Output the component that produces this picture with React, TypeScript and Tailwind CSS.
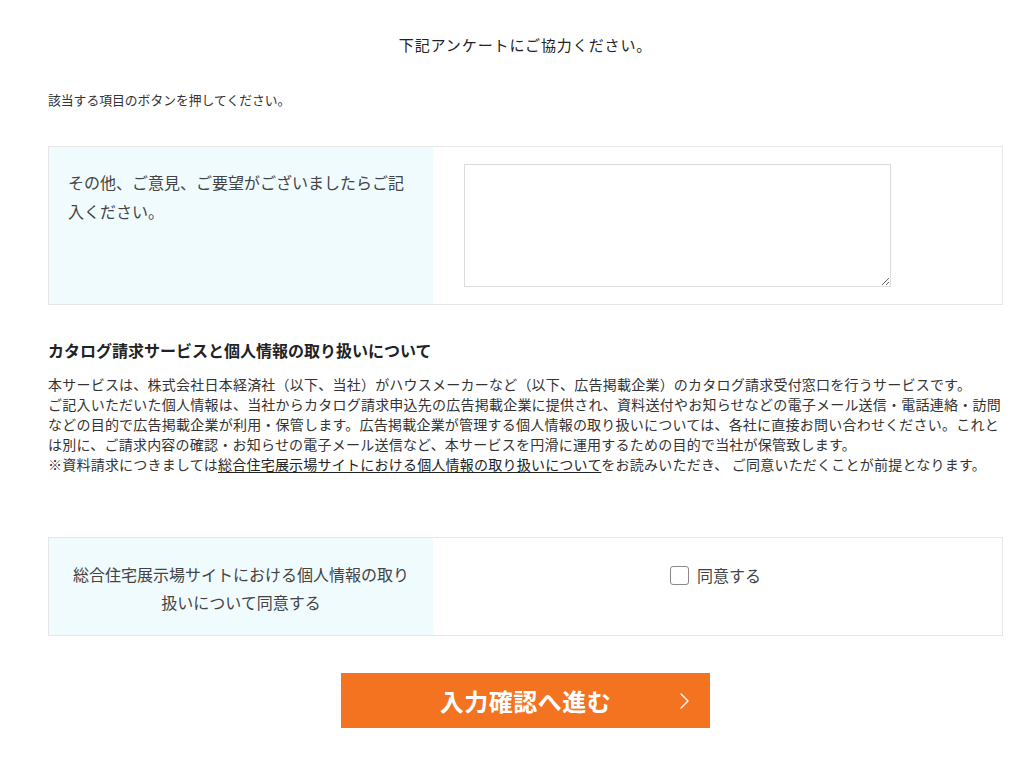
import React from 'react';

const font = { fontFamily: '"Noto Sans CJK JP", "Noto Sans", sans-serif' };

export default function App() {
    return (
        <div className="min-h-[771px] w-full bg-white text-[#333]" style={font}>
            <div className="ml-[48px] w-[955px] pt-[34px] pb-[43px]">
                {/* Intro */}
                <p className="text-center text-[15px] leading-[22px] tracking-[0.06em] text-[#222]">下記アンケートにご協力ください。</p>
                <p className="mt-[35px] text-[12.8px] leading-[18px] text-[#333]">該当する項目のボタンを押してください。</p>

                {/* Comment row */}
                <div className="mt-[37px] flex h-[159px] border border-[#e6e6e6]">
                    <div className="w-[384px] shrink-0 bg-[#f0fbfd] pl-[19px] pr-[14px] pt-[21px]">
                        <p className="text-[16px] leading-[29px] text-[#444]">
                            その他、ご意見、ご要望がございましたらご記入ください。
                        </p>
                    </div>
                    <div className="flex-1 pl-[31px] pt-[17px]">
                        <textarea className="h-[123px] w-[427px] resize-y border border-[#dcdcdc] bg-white outline-none"></textarea>
                    </div>
                </div>

                {/* Privacy text */}
                <h2 className="mt-[33px] text-[16px] font-bold leading-[24px] text-[#222]">
                    カタログ請求サービスと個人情報の取り扱いについて
                </h2>
                <div className="mt-[12px] text-[14px] leading-[20px] tracking-[0.016em] text-[#333]">
                    <p>本サービスは、株式会社日本経済社（以下、当社）がハウスメーカーなど（以下、広告掲載企業）のカタログ請求受付窓口を行うサービスです。</p>
                    <p>
                        ご記入いただいた個人情報は、当社からカタログ請求申込先の広告掲載企業に提供され、資料送付やお知らせなどの電子メール送信・電話連絡・訪問などの目的で広告掲載企業が利用・保管します。広告掲載企業が管理する個人情報の取り扱いについては、各社に直接お問い合わせください。これとは別に、ご請求内容の確認・お知らせの電子メール送信など、本サービスを円滑に運用するための目的で当社が保管致します。
                    </p>
                    <p>
                        ※資料請求につきましては
                        <a href="#" className="text-[#222] underline underline-offset-2">総合住宅展示場サイトにおける個人情報の取り扱いについて</a>
                        をお読みいただき、 ご同意いただくことが前提となります。
                    </p>
                </div>

                {/* Agreement row */}
                <div className="mt-[63px] flex h-[99px] border border-[#e6e6e6]">
                    <div className="flex w-[384px] shrink-0 items-center justify-center bg-[#f0fbfd] px-[22px] pt-[2px]">
                        <p className="text-center text-[16px] leading-[28px] text-[#444]">
                            総合住宅展示場サイトにおける個人情報の取り扱いについて同意する
                        </p>
                    </div>
                    <div className="flex flex-1 items-start justify-center pt-[25px] pr-[4px]">
                        <label className="flex items-center gap-[8px] text-[16px] leading-[24px] text-[#444]">
                            <span className="block h-[19px] w-[19px] rounded-[3px] border border-[#8a8a8a] bg-white"></span>
                            同意する
                        </label>
                    </div>
                </div>

                {/* Submit */}
                <div className="mt-[37px] flex justify-center">
                    <button className="relative flex h-[55px] w-[369px] items-center justify-center bg-[#f37321] text-[24px] font-bold tracking-[0.02em] text-white">
                        入力確認へ進む
                        <svg className="absolute right-[19px] top-1/2 -translate-y-1/2" width="14" height="20" viewBox="0 0 14 20" fill="none">
                            <path d="M4 3l7 7-7 7" stroke="#fff" strokeWidth="1.4" strokeLinecap="round" strokeLinejoin="round" />
                        </svg>
                    </button>
                </div>
            </div>
        </div>
    );
}
